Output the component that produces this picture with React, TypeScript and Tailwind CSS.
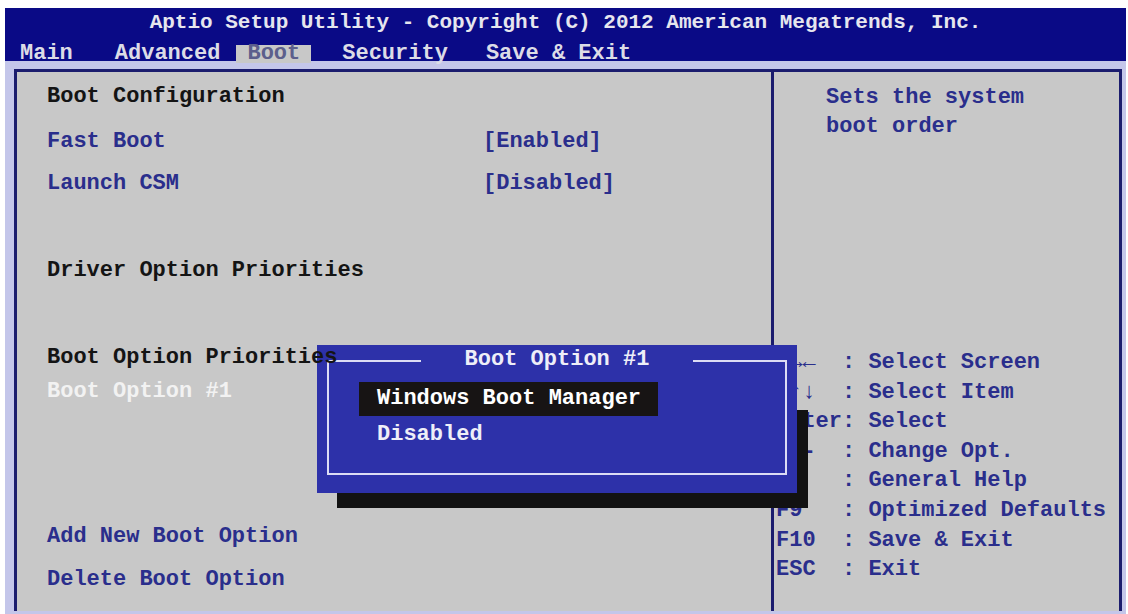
import React from 'react';

const helpLines = [
  ' →←  : Select Screen',
  ' ↑↓  : Select Item',
  'Enter: Select',
  '+/-  : Change Opt.',
  'F1   : General Help',
  'F9   : Optimized Defaults',
  'F10  : Save & Exit',
  'ESC  : Exit',
];

const App: React.FC = () => {
  return (
    <div className="relative h-[614px] w-[1128px] overflow-hidden bg-white pl-[5px] pr-[2px] pt-[8px] font-['Liberation_Mono',monospace] font-bold">
      <div className="flex h-[606px] flex-col bg-[#c4c6ea] pb-[3px]">
        {/* title bar + tabs */}
        <div className="h-[53px] shrink-0 bg-[#0a0a86]">
          <div className="h-[30px] pt-[1px] text-center text-[21px] leading-[28px] text-[#e6e6ee] whitespace-pre">
            Aptio Setup Utility - Copyright (C) 2012 American Megatrends, Inc.
          </div>
          <div className="mt-[7px] flex h-[18px] text-[22px] leading-[18px] text-[#dcdce6] whitespace-pre">
            <span className="ml-[15px]">Main</span>
            <span className="ml-[42px]">Advanced</span>
            <span className="ml-[16px] bg-[#c8c8c8] px-[11px] text-[#5c5f8c]">Boot</span>
            <span className="ml-[31px]">Security</span>
            <span className="ml-[38px]">Save &amp; Exit</span>
          </div>
        </div>

        {/* main panel */}
        <div className="ml-[9px] mr-[4px] mt-[8px] flex flex-1 border-[3px] border-b-0 border-[#1b1c6e] bg-[#c8c8c8] text-[22px]">
          <div className="w-[757px] border-r-[3px] border-[#1b1c6e] pl-[30px]">
            <div className="mt-[12px] h-[26px] leading-[26px] text-[#141414]">Boot Configuration</div>
            <div className="mt-[19px] grid h-[26px] grid-cols-[436px_auto] leading-[26px] text-[#2a2e8c]">
              <span>Fast Boot</span>
              <span>[Enabled]</span>
            </div>
            <div className="mt-[16px] grid h-[26px] grid-cols-[436px_auto] leading-[26px] text-[#2a2e8c]">
              <span>Launch CSM</span>
              <span>[Disabled]</span>
            </div>
            <div className="mt-[61px] h-[26px] leading-[26px] text-[#141414]">Driver Option Priorities</div>
            <div className="relative z-10 mt-[61px] h-[26px] w-fit leading-[26px] text-[#141414]">Boot Option Priorities</div>
            <div className="mt-[8px] h-[26px] leading-[26px] text-[#f2f2f2]">Boot Option #1</div>
            <div className="mt-[119px] h-[26px] leading-[26px] text-[#2a2e8c]">Add New Boot Option</div>
            <div className="mt-[17px] h-[26px] leading-[26px] text-[#2a2e8c]">Delete Boot Option</div>
          </div>

          <div className="flex-1 text-[#2a2e8c]">
            <div className="mt-[11px] pl-[52px] leading-[29px]">
              <div>Sets the system</div>
              <div>boot order</div>
            </div>
            <div className="mt-[207px] pl-[2px] leading-[29.6px] whitespace-pre">
              {helpLines.map((line) => (
                <div key={line}>{line}</div>
              ))}
            </div>
          </div>
        </div>
      </div>

      {/* popup shadow */}
      <div className="absolute left-[337px] top-[410px] h-[98px] w-[471px] bg-[#121212]" />

      {/* popup */}
      <div className="absolute left-[317px] top-[345px] h-[148px] w-[480px] bg-[#2d31a9] text-[22px] text-[#eeeef8]">
        <div className="absolute left-[10px] top-[15px] h-[115px] w-[460px] border-2 border-[#dcdcf4]" />
        <div className="relative flex justify-center pt-[2px]">
          <span className="bg-[#2d31a9] px-[44px] leading-[26px]">Boot Option #1</span>
        </div>
        <div className="relative ml-[42px] mt-[9px] h-[34px] w-[299px] bg-[#171414] pl-[18px] leading-[34px] text-white">
          Windows Boot Manager
        </div>
        <div className="relative ml-[60px] mt-[6px] leading-[26px]">Disabled</div>
      </div>
    </div>
  );
};

export default App;
